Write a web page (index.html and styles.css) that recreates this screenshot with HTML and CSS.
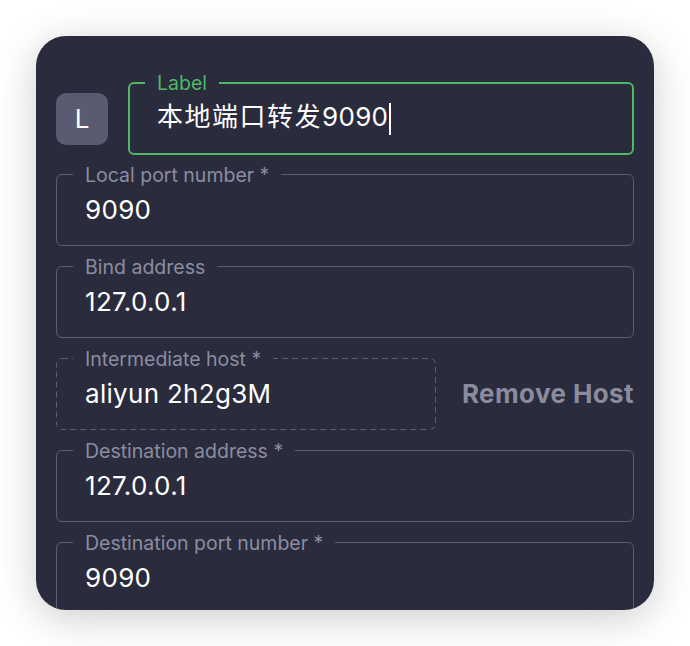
FILE: index.html
```html
<!DOCTYPE html>
<html lang="en">
<head>
<meta charset="utf-8">
<link rel="stylesheet" href="styles.css">
</head>
<body>
<div class="card">
  <div class="label-row">
    <div class="badge">L</div>
    <fieldset class="field field-active">
      <legend>Label</legend>
      <div class="value"><span class="cjk">本地端口转发</span>9090<span class="caret"></span></div>
    </fieldset>
  </div>
  <fieldset class="field">
    <legend>Local port number *</legend>
    <div class="value">9090</div>
  </fieldset>
  <fieldset class="field">
    <legend>Bind address</legend>
    <div class="value">127.0.0.1</div>
  </fieldset>
  <div class="host-row">
    <fieldset class="field field-dashed">
      <legend>Intermediate host *</legend>
      <div class="value">aliyun 2h2g3M</div>
    </fieldset>
    <button class="remove">Remove Host</button>
  </div>
  <fieldset class="field">
    <legend>Destination address *</legend>
    <div class="value">127.0.0.1</div>
  </fieldset>
  <fieldset class="field">
    <legend>Destination port number *</legend>
    <div class="value">9090</div>
  </fieldset>
</div>
</body>
</html>
```
FILE: styles.css
```css
* { box-sizing: border-box; }
html, body {
  margin: 0;
  padding: 0;
  background: #ffffff;
}
body {
  padding: 36px;
  font-family: "Inter", "Noto Sans CJK SC", sans-serif;
}
.card {
  width: 618px;
  height: 574px;
  background: #2a2b3c;
  border-radius: 30px;
  box-shadow: 0 8px 40px rgba(0, 0, 0, 0.2);
  overflow: hidden;
  padding: 37px 20px 0 20px;
  display: flex;
  flex-direction: column;
  gap: 11px;
}
.label-row {
  display: flex;
  align-items: flex-end;
  gap: 20px;
  margin-bottom: -1px;
}
.badge {
  flex: none;
  width: 52px;
  height: 52px;
  border-radius: 10px;
  background: #5a5b70;
  color: #ffffff;
  font-size: 26px;
  font-weight: 400;
  display: flex;
  align-items: center;
  justify-content: center;
  margin-bottom: 10px;
}
.field {
  margin: 0;
  padding: 0 16px 19px 16px;
  border: 1px solid #5d5e72;
  border-radius: 6px;
  min-width: 0;
  width: 578px;
}
.field legend {
  padding: 0 12px;
  font-size: 19.5px;
  line-height: 20px;
  color: #8c8da1;
  background: #2a2b3c;
}
.field .value {
  padding-left: 12px;
  margin-top: 9px;
  font-size: 26px;
  line-height: 32px;
  letter-spacing: 0.3px;
  color: #ffffff;
  white-space: nowrap;
}
.cjk {
  letter-spacing: 1.5px;
}
.field-active {
  flex: 1;
  width: auto;
  border: 2px solid #4db865;
  padding: 0 15px 18px 15px;
}
.field-active .value {
  margin-top: 8px;
}
.field-active legend {
  color: #4db865;
}
.caret {
  display: inline-block;
  width: 2px;
  height: 32px;
  background: #ffffff;
  vertical-align: middle;
  margin-left: 1px;
}
.host-row {
  display: flex;
  align-items: center;
  justify-content: space-between;
}
.field-dashed {
  width: 380px;
  border-color: transparent;
  background-origin: border-box;
  background-repeat: no-repeat;
  background-image: url("data:image/svg+xml;utf8,<svg xmlns='http://www.w3.org/2000/svg' width='100%' height='100%'><rect x='0' y='0' width='100%' height='100%' rx='6' ry='6' fill='none' stroke='%235d5e72' stroke-width='2' stroke-dasharray='6 4'/></svg>");
}
.remove {
  background: none;
  border: none;
  padding: 0;
  margin-top: 8px;
  font-family: inherit;
  font-size: 26px;
  font-weight: 700;
  letter-spacing: 0.4px;
  color: #8a8b9f;
}
```
